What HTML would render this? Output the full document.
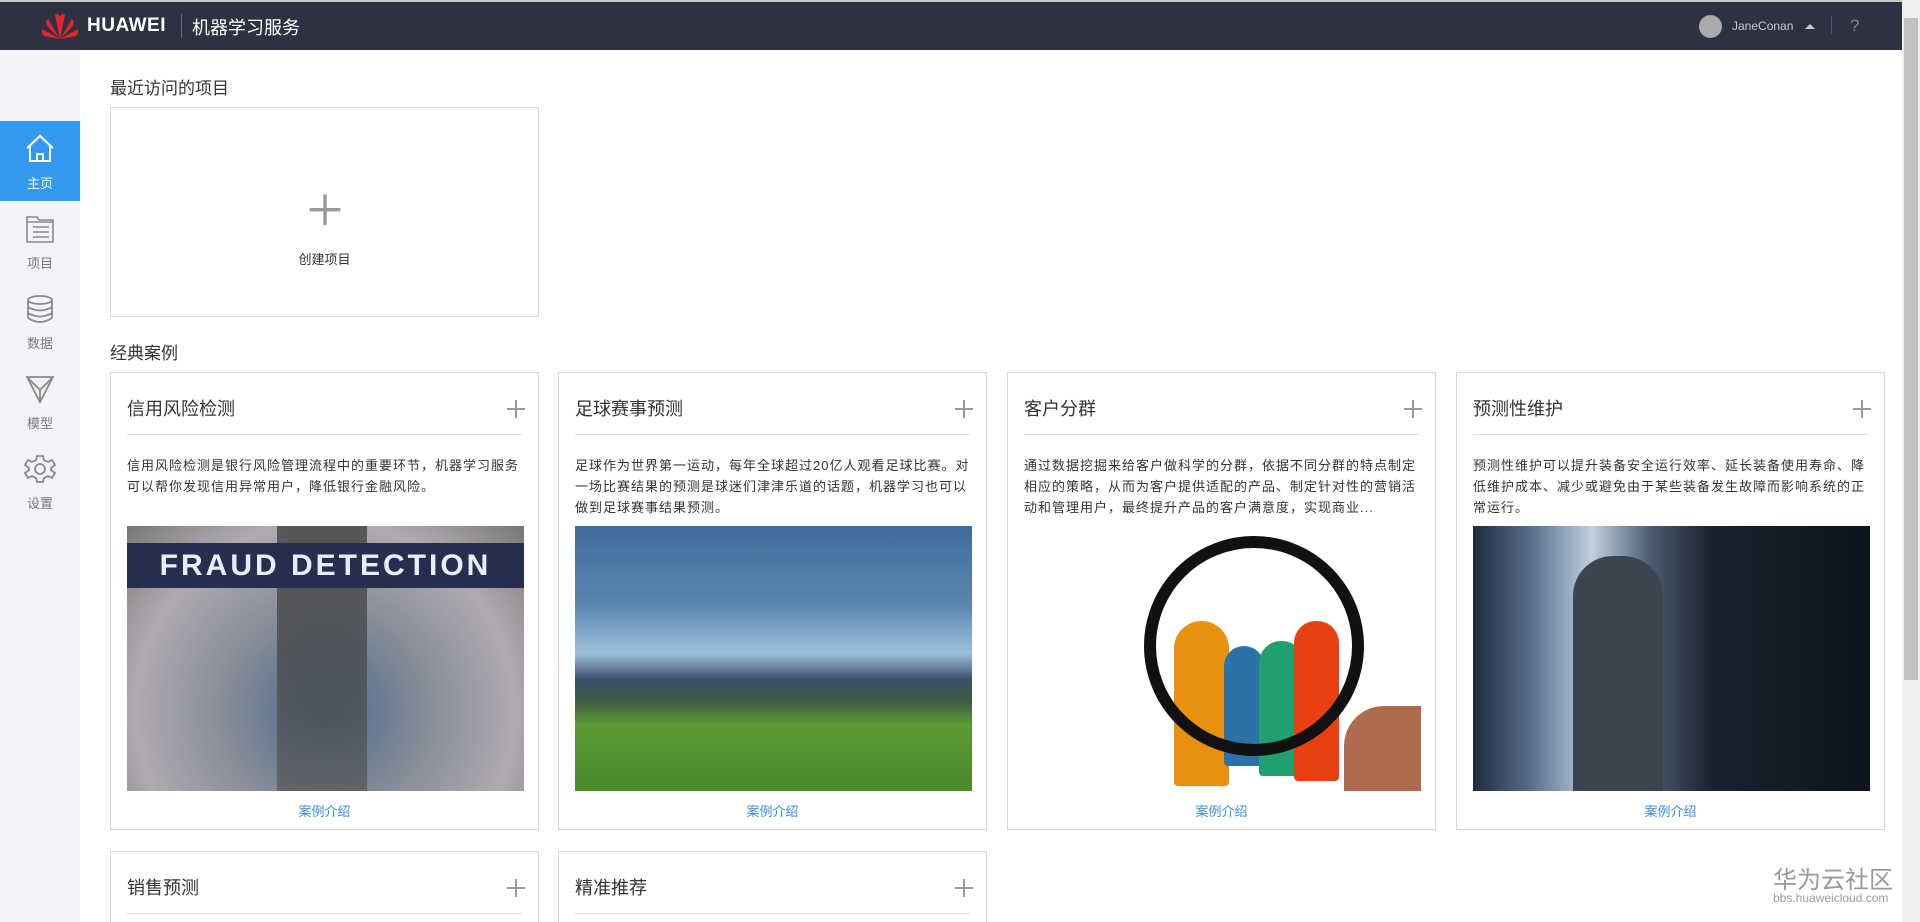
<!DOCTYPE html>
<html><head><meta charset="utf-8"><style>
*{box-sizing:border-box;margin:0;padding:0}
html,body{width:1920px;height:922px;overflow:hidden}
body{background:#fff;font-family:"Liberation Sans","Noto Sans CJK SC",sans-serif;color:#333}
#root{position:relative;width:1920px;height:922px;overflow:hidden}
.hdr{position:absolute;left:0;top:0;width:1902px;height:50px;background:#2e3142;border-top:2px solid #c8c8c8}
.side{position:absolute;left:0;top:50px;width:80px;height:872px;background:#f3f4f7}
.item{position:absolute;left:0;width:80px;height:80px;text-align:center;color:#777;font-size:13px}
.item svg{position:absolute;left:24px;top:12px}
.item span{position:absolute;left:0;right:0;top:52px}
.act{background:#3399ee;color:#fff}
.h2{position:absolute;left:110px;font-size:17px;color:#333}
.card{position:absolute;width:429px;border:1px solid #d8d8d8;background:#fff}
.t{position:absolute;left:16px;top:22px;font-size:18px;color:#333}
.pl{position:absolute;right:14px;top:27px;width:16px;height:16px}
.pl:before,.pl:after{content:"";position:absolute;background:#999}
.pl:before{left:7px;top:0;width:1.5px;height:18px}
.pl:after{left:-1px;top:8px;width:18px;height:1.5px}
.dv{position:absolute;left:16px;right:16px;top:61px;height:1px;background:#ddd}
.d{position:absolute;left:16px;right:13px;top:82px;font-size:13px;line-height:21px;color:#333;letter-spacing:1px}
.im{position:absolute;left:16px;top:153px;width:397px;height:265px;overflow:hidden}
.lk{position:absolute;left:0;right:0;top:428px;text-align:center;font-size:13px;color:#3a8ad8}
</style></head><body><div id="root">
<div class="hdr">
 <svg style="position:absolute;left:40px;top:9px" width="40" height="30" viewBox="0 0 40 30"><g fill="#e0262b"><path d="M20 28 L15 4 Q18 1 20 6Z"/><path d="M20 28 L25 4 Q22 1 20 6Z"/><path d="M20 28 L8 8 Q5 10 7 15Z"/><path d="M20 28 L32 8 Q35 10 33 15Z"/><path d="M20 28 L2 18 Q1 22 4 25Z"/><path d="M20 28 L38 18 Q39 22 36 25Z"/></g></svg>
 <div style="position:absolute;left:87px;top:13px;color:#fff;font-weight:bold;font-size:19px;letter-spacing:0.5px">HUAWEI</div>
 <div style="position:absolute;left:181px;top:12px;width:1px;height:24px;background:#666"></div>
 <div style="position:absolute;left:192px;top:12px;color:#fff;font-size:18px">机器学习服务</div>
 <div style="position:absolute;left:1699px;top:13px;width:23px;height:23px;border-radius:50%;background:#aaa"></div>
 <div style="position:absolute;left:1732px;top:17px;color:#ccc;font-size:12px">JaneConan</div>
 <div style="position:absolute;left:1805px;top:22px;border-left:5px solid transparent;border-right:5px solid transparent;border-bottom:5px solid #ccc"></div>
 <div style="position:absolute;left:1831px;top:14px;width:1px;height:18px;background:#555"></div>
 <div style="position:absolute;left:1850px;top:14px;color:#888;font-size:17px">?</div>
</div>
<div style="position:absolute;left:1902px;top:0;width:18px;height:922px;background:#f0f0f0"></div>
<div style="position:absolute;left:1904px;top:18px;width:14px;height:662px;background:#c1c1c1"></div>
<div class="side">
 <div class="item act" style="top:71px"><svg width="32" height="32" viewBox="0 0 32 32" fill="none" stroke="#fff" stroke-width="2"><path d="M3 15 L16 3 L29 15 M6 13 V28 H26 V13 M13 28 V21 H19 V28"/></svg><span>主页</span></div>
 <div class="item" style="top:151px"><svg width="32" height="32" viewBox="0 0 32 32" fill="none" stroke="#888" stroke-width="1.6"><path d="M3 4 H13 L15 7 H29 V29 H3Z M3 9 H29"/><path d="M9 14 H25 M9 19 H25 M9 24 H25"/></svg><span>项目</span></div>
 <div class="item" style="top:231px"><svg width="32" height="32" viewBox="0 0 32 32" fill="none" stroke="#888" stroke-width="1.8"><ellipse cx="16" cy="7" rx="12" ry="4"/><path d="M4 7 V25 Q16 33 28 25 V7 M4 14 Q16 21 28 14 M4 20 Q16 27 28 20"/></svg><span>数据</span></div>
 <div class="item" style="top:311px"><svg width="32" height="32" viewBox="0 0 32 32" fill="none" stroke="#888" stroke-width="1.8"><path d="M3 4 H29 L16 29Z M3 4 L16 17 L29 4 M16 17 V29"/></svg><span>模型</span></div>
 <div class="item" style="top:391px"><svg width="32" height="32" viewBox="0 0 32 32" fill="none" stroke="#888" stroke-width="1.8"><path d="M13 3 H19 L20 7 L24 9 L28 7 L31 12 L27 15 V17 L31 20 L28 25 L24 23 L20 25 L19 29 H13 L12 25 L8 23 L4 25 L1 20 L5 17 V15 L1 12 L4 7 L8 9 L12 7Z"/><circle cx="16" cy="16" r="5"/></svg><span>设置</span></div>
</div>
<div class="h2" style="top:74px">最近访问的项目</div>
<div style="position:absolute;left:110px;top:107px;width:429px;height:210px;border:1px solid #d8d8d8">
 <div class="pl" style="left:206px;top:92px;width:16px;height:16px;transform:scale(1.7)"></div>
 <div style="position:absolute;left:0;right:0;top:141px;text-align:center;font-size:13px">创建项目</div>
</div>
<div class="h2" style="top:339px">经典案例</div>

<div class="card" style="left:110px;top:372px;height:458px"><div class="t">信用风险检测</div><div class="pl"></div><div class="dv"></div>
<div class="d">信用风险检测是银行风险管理流程中的重要环节，机器学习服务可以帮你发现信用异常用户，降低银行金融风险。</div>
<div class="im" style="background:radial-gradient(circle at 50% 70%,#4a6a8a,#8a8f9a 40%,#b0aab0 70%,#777)"><div style="position:absolute;left:150px;top:0;width:90px;height:265px;background:linear-gradient(#333,#555);opacity:.7"></div><div style="position:absolute;left:0;right:0;top:17px;height:45px;background:#26304e;color:#e8eef8;font-weight:bold;font-size:30px;text-align:center;line-height:45px;letter-spacing:3px">FRAUD DETECTION</div></div>
<div class="lk">案例介绍</div></div>

<div class="card" style="left:558px;top:372px;height:458px"><div class="t">足球赛事预测</div><div class="pl"></div><div class="dv"></div>
<div class="d">足球作为世界第一运动，每年全球超过20亿人观看足球比赛。对一场比赛结果的预测是球迷们津津乐道的话题，机器学习也可以做到足球赛事结果预测。</div>
<div class="im" style="background:linear-gradient(#3f6c9c 0%,#5a86b0 30%,#9cc0da 48%,#3a4e6a 58%,#3e5a40 66%,#5c9a34 75%,#4a8a2c 100%)"></div>
<div class="lk">案例介绍</div></div>

<div class="card" style="left:1007px;top:372px;height:458px"><div class="t">客户分群</div><div class="pl"></div><div class="dv"></div>
<div class="d">通过数据挖掘来给客户做科学的分群，依据不同分群的特点制定相应的策略，从而为客户提供适配的产品、制定针对性的营销活动和管理用户，最终提升产品的客户满意度，实现商业...</div>
<div class="im" style="background:#fff"><div style="position:absolute;left:150px;top:95px;width:55px;height:165px;background:#e8900f;border-radius:28px 28px 4px 4px"></div><div style="position:absolute;left:200px;top:120px;width:40px;height:120px;background:#2a72a8;border-radius:20px 20px 4px 4px"></div><div style="position:absolute;left:235px;top:115px;width:45px;height:135px;background:#20a070;border-radius:22px 22px 4px 4px"></div><div style="position:absolute;left:270px;top:95px;width:45px;height:160px;background:#e84010;border-radius:22px 22px 4px 4px"></div><div style="position:absolute;left:120px;top:10px;width:220px;height:220px;border:12px solid #111;border-radius:50%"></div><div style="position:absolute;left:320px;top:180px;width:80px;height:85px;background:#b06a50;border-radius:40px 0 0 0"></div></div>
<div class="lk">案例介绍</div></div>

<div class="card" style="left:1456px;top:372px;height:458px"><div class="t">预测性维护</div><div class="pl"></div><div class="dv"></div>
<div class="d">预测性维护可以提升装备安全运行效率、延长装备使用寿命、降低维护成本、减少或避免由于某些装备发生故障而影响系统的正常运行。</div>
<div class="im" style="background:linear-gradient(90deg,#1e2a3c,#5a7090 15%,#c0d0e0 30%,#4a5a70 45%,#1a2230 60%,#0e141c 100%)"><div style="position:absolute;left:100px;top:30px;width:90px;height:235px;background:#3a4550;border-radius:40px 40px 0 0"></div></div>
<div class="lk">案例介绍</div></div>

<div class="card" style="left:110px;top:851px;height:100px"><div class="t">销售预测</div><div class="pl"></div><div class="dv"></div></div>
<div class="card" style="left:558px;top:851px;height:100px"><div class="t">精准推荐</div><div class="pl"></div><div class="dv"></div></div>

<div style="position:absolute;left:1773px;top:860px;font-size:24px;color:#999">华为云社区</div>
<div style="position:absolute;left:1773px;top:891px;font-size:12px;color:#999">bbs.huaweicloud.com</div>
</div></body></html>
